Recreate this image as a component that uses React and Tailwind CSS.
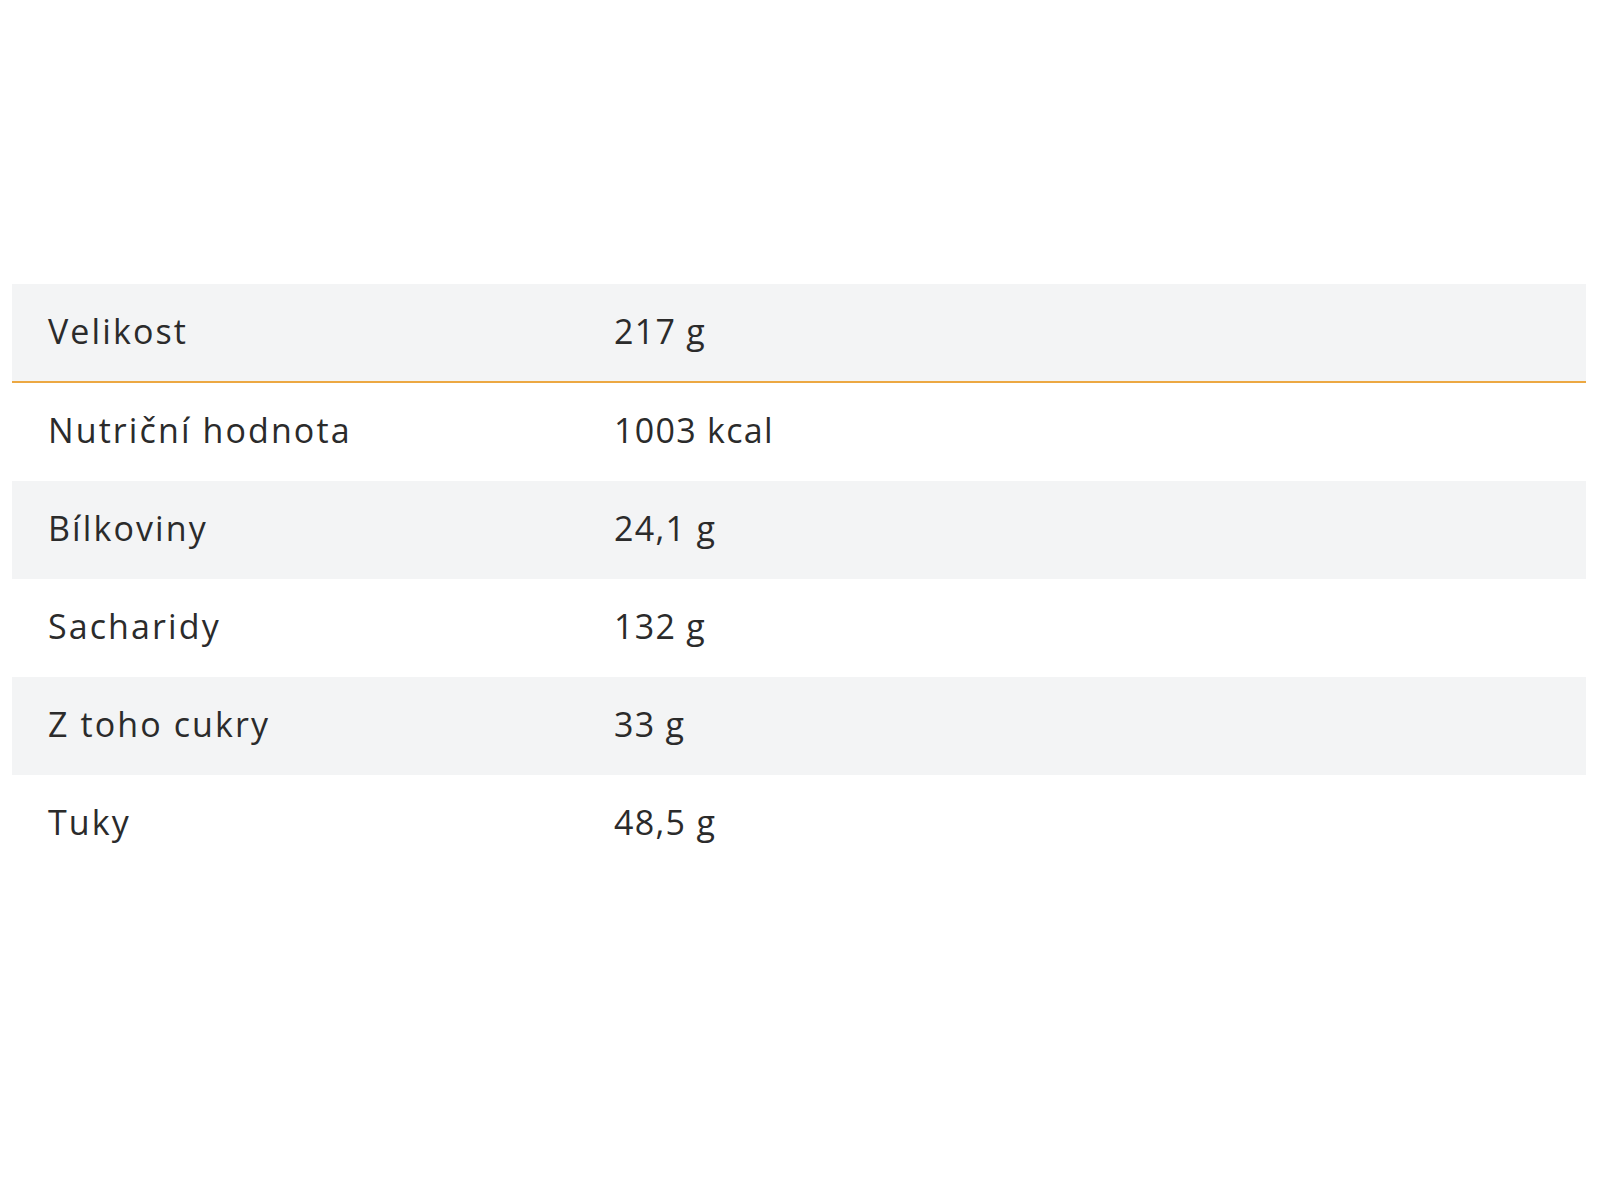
import React from "react";

const rows = [
  { label: "Velikost", value: "217 g" },
  { label: "Nutriční hodnota", value: "1003 kcal" },
  { label: "Bílkoviny", value: "24,1 g" },
  { label: "Sacharidy", value: "132 g" },
  { label: "Z toho cukry", value: "33 g" },
  { label: "Tuky", value: "48,5 g" },
];

const App = () => {
  return (
    <div
      className="min-h-screen bg-white pt-[284px] pl-3 pr-[14px] text-[#2b2b2b]"
      style={{ fontFamily: '"Open Sans", "Noto Sans", sans-serif' }}
    >
      <div className="flex flex-col">
        {rows.map((row, i) => (
          <div
            key={row.label}
            className={
              i === 0
                ? "grid h-[99px] grid-cols-[602px_1fr] items-center border-b-2 border-[#eca842] bg-[#f3f4f5]"
                : i % 2 === 0
                ? "grid h-[98px] grid-cols-[602px_1fr] items-center bg-[#f3f4f5]"
                : "grid h-[98px] grid-cols-[602px_1fr] items-center bg-white"
            }
          >
            <div className="pl-9 pb-1 text-[34px] font-normal leading-none tracking-[2.1px]">
              {row.label}
            </div>
            <div className="pb-1 text-[34px] font-normal leading-none tracking-[1.3px]">
              {row.value}
            </div>
          </div>
        ))}
      </div>
    </div>
  );
};

export default App;
